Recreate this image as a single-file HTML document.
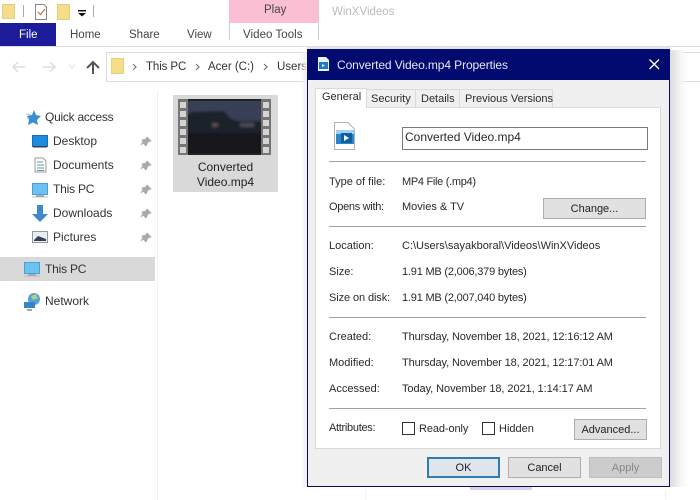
<!DOCTYPE html>
<html><head><meta charset="utf-8"><style>
html,body{margin:0;padding:0;background:#fff}
#p{position:relative;width:700px;height:500px;overflow:hidden;background:#fff;font-family:"Liberation Sans",sans-serif;font-size:12px;color:#222}
.a{position:absolute}
.t{position:absolute;white-space:nowrap;line-height:14px}
.d{font-size:11px;color:#2a2a2a}
.hr{position:absolute;left:329px;width:317px;height:1px;background:#a0a0a0}
.btn{position:absolute;background:#e1e1e1;border:1px solid #adadad;box-sizing:border-box;text-align:center;color:#222;font-size:11px}
svg{position:absolute;overflow:visible}
</style></head><body><div id="p">

<!-- ribbon -->
<svg style="left:0;top:0" width="110" height="24">
<path d="M2.500 4.500H14.500V18.500H2.500Z" fill="#f6dd8a" stroke="#e8cf80"/>
<rect x="23" y="5" width="1" height="12" fill="#aaa"/>
<path d="M35.500 4.500H44L46.500 7V19.500H35.500Z" fill="#fff" stroke="#888"/>
<path d="M38 12L40.500 14.500L45 9" fill="none" stroke="#c0703a" stroke-width="1.200"/>
<path d="M57.500 4.500H69.500V19.500H57.500Z" fill="#f6dd8a" stroke="#e8cf80"/>
<rect x="78" y="10" width="8" height="1.500" fill="#111"/>
<path d="M78 13H86L82 16.500Z" fill="#111"/>
<rect x="93" y="5" width="1" height="12" fill="#aaa"/>
</svg>
<div class="a" style="left:229px;top:0;width:90px;height:23px;background:#fbbfd4"></div>
<div class="t" style="left:264px;top:3px;color:#444;font-size:11.500px">Play</div>
<div class="t" style="left:332px;top:5px;color:#bbb;font-size:11.500px">WinXVideos</div>
<div class="a" style="left:0;top:23px;width:56px;height:23px;background:#1c1c9a"></div>
<div class="t" style="left:19px;top:28px;color:#fff;font-size:11.500px">File</div>
<div class="t" style="left:70px;top:28px;color:#444;font-size:11.500px">Home</div>
<div class="t" style="left:129px;top:28px;color:#444;font-size:11.500px">Share</div>
<div class="t" style="left:187px;top:28px;color:#444;font-size:11.500px">View</div>
<div class="t" style="left:243px;top:28px;color:#444;font-size:11.500px;letter-spacing:.05px">Video Tools</div>
<div class="a" style="left:229px;top:23px;width:1px;height:17px;background:#ccc"></div>
<div class="a" style="left:318px;top:23px;width:1px;height:17px;background:#ccc"></div>
<div class="a" style="left:0;top:46px;width:700px;height:1px;background:#ddd"></div>

<!-- nav bar -->
<svg style="left:0;top:50px" width="110" height="30">
<path d="M25 17H13M18 12L13 17L18 22" fill="none" stroke="#ddd" stroke-width="1.500"/>
<path d="M43 17H55M50 12L55 17L50 22" fill="none" stroke="#ddd" stroke-width="1.500"/>
<path d="M69 15L72 18L75 15" fill="none" stroke="#ddd"/>
<path d="M93 24V12M87 18L93 12L99 18" fill="none" stroke="#555" stroke-width="2"/>
</svg>
<div class="a" style="left:106px;top:52px;width:650px;height:30px;border:1px solid #dcdcdc;box-sizing:border-box"></div>
<svg style="left:110px;top:57px" width="190" height="20">
<path d="M1.500 1.500H13.500V16.500H1.500Z" fill="#f6dd8a" stroke="#e8cf80"/>
<path d="M23 7L26 10L23 13" fill="none" stroke="#777" stroke-width="1.200"/>
<path d="M86 7L89 10L86 13" fill="none" stroke="#777" stroke-width="1.200"/>
<path d="M154 7L157 10L154 13" fill="none" stroke="#777" stroke-width="1.200"/>
</svg>
<div class="t" style="left:146px;top:60px;color:#333;font-size:11.500px;letter-spacing:-.1px">This PC</div>
<div class="t" style="left:208px;top:60px;color:#333;font-size:11.500px">Acer (C:)</div>
<div class="t" style="left:277px;top:60px;color:#333;font-size:11.500px">Users</div>

<!-- sidebar -->
<div class="a" style="left:157px;top:90px;width:1px;height:410px;background:#f0f0f0"></div>
<div class="a" style="left:0;top:257px;width:155px;height:24px;background:#d9d9d9"></div>
<div class="t" style="left:45px;top:110px;color:#333;letter-spacing:-.25px">Quick access</div>
<div class="t" style="left:53px;top:134px;color:#333">Desktop</div>
<div class="t" style="left:53px;top:158px;color:#333">Documents</div>
<div class="t" style="left:53px;top:182px;color:#333;letter-spacing:-.2px">This PC</div>
<div class="t" style="left:53px;top:206px;color:#333">Downloads</div>
<div class="t" style="left:53px;top:230px;color:#333">Pictures</div>
<div class="t" style="left:45px;top:262px;color:#333;letter-spacing:-.2px">This PC</div>
<div class="t" style="left:45px;top:294px;color:#333">Network</div>
<svg style="left:0;top:100px" width="160" height="220">
<path d="M34 10L36 15L41 16L37 20L38 25L33 22.500L28 25L29 20L27 16L32 15Z" fill="#3a8fd0"/>
<path d="M26 14L31 15M27 18L29 18" stroke="#9cc8e8"/>
<rect x="32.500" y="35.500" width="15" height="11" fill="#1d8be0" stroke="#1670b8"/>
<rect x="33" y="46" width="14" height="1.500" fill="#345"/>
<path d="M35 58H43L46 61V72H35Z" fill="#fff" stroke="#999"/>
<path d="M37 62H43M37 65H44M37 68H44M37 70.500H44" stroke="#5b9a9c"/>
<rect x="32.500" y="83.500" width="15" height="11" fill="#6cc3f2" stroke="#4a9fd8"/>
<path d="M36 96H44" stroke="#999" stroke-width="1.500"/><path d="M32 97H48" stroke="#bbb"/>
<path d="M37 105H43V114H48L40 122L32 114H37Z" fill="#3f86cc"/>
<rect x="32.500" y="131.500" width="15" height="11" fill="#e8eef2" stroke="#999"/>
<path d="M34 140L38 136L46 139V141H34Z" fill="#345"/>
<rect x="24.500" y="162.500" width="15" height="11" fill="#6cc3f2" stroke="#4a9fd8"/>
<path d="M28 175H36" stroke="#999" stroke-width="1.500"/><path d="M24 176H40" stroke="#bbb"/>
<circle cx="34" cy="199" r="6" fill="#5aa0d8"/><path d="M31 196L36 194L38 198L33 200Z" fill="#a9d18e"/>
<rect x="24" y="202" width="11" height="6" fill="#2f86c9"/>
<path d="M27 210H32" stroke="#888" stroke-width="1.500"/>
<g fill="#aaa" stroke="#aaa" stroke-width=".8">
<path d="M147 37L151 41L148 42L146 46L143 43L141 45L143 41L142 40L146 39Z"/>
<path d="M147 61L151 65L148 66L146 70L143 67L141 69L143 65L142 64L146 63Z"/>
<path d="M147 85L151 89L148 90L146 94L143 91L141 93L143 89L142 88L146 87Z"/>
<path d="M147 109L151 113L148 114L146 118L143 115L141 117L143 113L142 112L146 111Z"/>
<path d="M147 133L151 137L148 138L146 142L143 139L141 141L143 137L142 136L146 135Z"/>
</g>
</svg>

<!-- file tile -->
<div class="a" style="left:173px;top:95px;width:105px;height:97px;background:#d9d9d9"></div>
<svg style="left:178px;top:99px" width="94" height="56">
<defs><filter id="b" x="0" y="0" width="1" height="1"><feGaussianBlur stdDeviation="1.200"/></filter><clipPath id="c"><rect x="10" y="2" width="73" height="52"/></clipPath></defs>
<rect width="93" height="56" fill="#757575"/>
<rect x="10" y="0" width="73" height="56" fill="#222"/>
<g clip-path="url(#c)"><g filter="url(#b)">
<rect x="8" y="0" width="77" height="56" fill="#383f55"/>
<path d="M8 16L14 13L46 12L52 19L60 22H85V58H8Z" fill="#1e2029"/>
<rect x="8" y="34" width="77" height="24" fill="#14151b"/>
<rect x="34" y="24" width="6" height="4" fill="#5a4a50"/>
<rect x="62" y="24" width="14" height="4" fill="#464b58"/>
</g></g>
<g fill="#d4d4d4">
<rect x="2" y="3" width="6" height="6"/><rect x="2" y="12" width="6" height="6"/><rect x="2" y="21" width="6" height="6"/><rect x="2" y="30" width="6" height="6"/><rect x="2" y="39" width="6" height="6"/><rect x="2" y="48" width="6" height="6"/>
<rect x="85" y="3" width="6" height="6"/><rect x="85" y="12" width="6" height="6"/><rect x="85" y="21" width="6" height="6"/><rect x="85" y="30" width="6" height="6"/><rect x="85" y="39" width="6" height="6"/><rect x="85" y="48" width="6" height="6"/>
</g></svg>
<div class="t" style="left:173px;top:160px;width:105px;text-align:center;color:#222;line-height:15px">Converted<br>Video.mp4</div>

<!-- dialog -->
<div class="a" style="left:307px;top:47px;width:363px;height:2px;background:#e4e4f0"></div>
<div class="a" style="left:670px;top:50px;width:18px;height:437px;background:linear-gradient(to right,#dcdcdc,#f4f4f4 55%,rgba(255,255,255,0))"></div>
<div class="a" style="left:300px;top:52px;width:7px;height:435px;background:linear-gradient(to left,#eee,rgba(255,255,255,0))"></div>
<div class="a" style="left:470px;top:487px;width:62px;height:3px;background:#d4d4e4"></div>
<div class="a" style="left:365px;top:490px;width:1px;height:10px;background:#f2f2f2"></div>
<div class="a" style="left:665px;top:490px;width:1px;height:10px;background:#f2f2f2"></div>
<div class="a" style="left:307px;top:49px;width:363px;height:438px;background:#f0f0f0;border:1px solid #0a0a5e;box-sizing:border-box"></div>
<div class="a" style="left:307px;top:49px;width:363px;height:31px;background:#010a6e"></div>
<svg style="left:318px;top:57px" width="12" height="15">
<path d="M0 0H8L11 3V14H0Z" fill="#e8f2fa"/><rect x="1" y="5" width="9" height="7" fill="#1f7cc0"/><path d="M4 7L7 8.500L4 10Z" fill="#fff"/>
</svg>
<div class="t" style="left:337px;top:58px;color:#e8e8f4;font-size:12px;letter-spacing:-.1px">Converted Video.mp4 Properties</div>
<svg style="left:648px;top:58px" width="12" height="12"><path d="M1.500 1.500L11 11M11 1.500L1.500 11" stroke="#fff" stroke-width="1.300"/></svg>

<div class="a" style="left:315px;top:107px;width:346px;height:342px;background:#fff;border:1px solid #d9d9d9;box-sizing:border-box"></div>
<div class="a" style="left:366px;top:89px;width:187px;height:19px;background:#f0f0f0;border:1px solid #d9d9d9;box-sizing:border-box"></div>
<div class="a" style="left:315px;top:88px;width:52px;height:20px;background:#fff;border:1px solid #d9d9d9;border-bottom:none;box-sizing:border-box"></div>
<div class="a" style="left:415px;top:89px;width:1px;height:19px;background:#d9d9d9"></div>
<div class="a" style="left:459px;top:89px;width:1px;height:19px;background:#d9d9d9"></div>
<div class="t d" style="left:322px;top:90px">General</div>
<div class="t d" style="left:371px;top:92px">Security</div>
<div class="t d" style="left:421px;top:92px">Details</div>
<div class="t d" style="left:465px;top:92px">Previous Versions</div>

<svg style="left:334px;top:122px" width="21" height="28">
<path d="M0.500 0.500H14L20.500 7V27.500H0.500Z" fill="#fff" stroke="#aab4bc"/>
<rect x="2" y="8" width="18" height="14" fill="#2a86c8"/><rect x="2" y="8" width="18" height="4" fill="#9fd0ee"/>
<rect x="7" y="11" width="11" height="10" fill="#0f5fa6"/><path d="M10 13L15 16L10 19Z" fill="#fff"/>
</svg>
<div class="a" style="left:402px;top:127px;width:246px;height:23px;border:1px solid #7a7a7a;box-sizing:border-box;background:#fff"></div>
<div class="t" style="left:405px;top:130px;color:#2a2a2a">Converted Video.mp4</div>
<div class="hr" style="top:161px"></div>
<div class="t d" style="left:329px;top:175px">Type of file:</div>
<div class="t d" style="left:402px;top:175px;letter-spacing:-.3px">MP4 File (.mp4)</div>
<div class="t d" style="left:329px;top:200px;letter-spacing:-.3px">Opens with:</div>
<div class="t d" style="left:402px;top:200px">Movies &amp; TV</div>
<div class="btn" style="left:543px;top:198px;width:103px;height:21px;line-height:21px">Change...</div>
<div class="hr" style="top:226px"></div>
<div class="t d" style="left:329px;top:239px">Location:</div>
<div class="t d" style="left:402px;top:239px">C:\Users\sayakboral\Videos\WinXVideos</div>
<div class="t d" style="left:329px;top:265px">Size:</div>
<div class="t d" style="left:402px;top:265px;letter-spacing:-.2px">1.91 MB (2,006,379 bytes)</div>
<div class="t d" style="left:329px;top:291px;letter-spacing:-.1px">Size on disk:</div>
<div class="t d" style="left:402px;top:291px;letter-spacing:-.2px">1.91 MB (2,007,040 bytes)</div>
<div class="hr" style="top:317px"></div>
<div class="t d" style="left:329px;top:330px">Created:</div>
<div class="t d" style="left:402px;top:330px;letter-spacing:-.12px">Thursday, November 18, 2021, 12:16:12 AM</div>
<div class="t d" style="left:329px;top:356px">Modified:</div>
<div class="t d" style="left:402px;top:356px;letter-spacing:-.12px">Thursday, November 18, 2021, 12:17:01 AM</div>
<div class="t d" style="left:329px;top:382px">Accessed:</div>
<div class="t d" style="left:402px;top:382px;letter-spacing:-.07px">Today, November 18, 2021, 1:14:17 AM</div>
<div class="hr" style="top:408px"></div>
<div class="t d" style="left:329px;top:421px;letter-spacing:-.3px">Attributes:</div>
<div class="a" style="left:402px;top:422px;width:13px;height:13px;border:1px solid #333;box-sizing:border-box;background:#fff"></div>
<div class="t d" style="left:419px;top:422px;letter-spacing:-.1px">Read-only</div>
<div class="a" style="left:482px;top:422px;width:13px;height:13px;border:1px solid #333;box-sizing:border-box;background:#fff"></div>
<div class="t d" style="left:499px;top:422px">Hidden</div>
<div class="btn" style="left:574px;top:419px;width:73px;height:21px;line-height:21px">Advanced...</div>
<div class="btn" style="left:427px;top:457px;width:73px;height:21px;line-height:19px;border:2px solid #2f7cb0;background:#dfe5ea">OK</div>
<div class="btn" style="left:508px;top:457px;width:73px;height:21px;line-height:21px">Cancel</div>
<div class="btn" style="left:589px;top:457px;width:73px;height:21px;line-height:21px;background:#ccc;border-color:#bfbfbf;color:#888">Apply</div>
</div></body></html>
